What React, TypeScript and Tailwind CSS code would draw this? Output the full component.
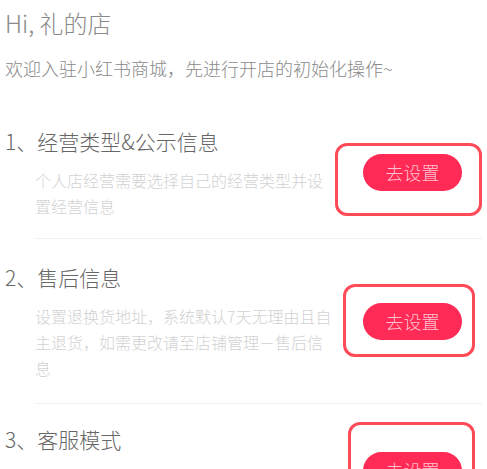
import React from "react";

const font = { fontFamily: '"Noto Sans CJK SC", "Noto Sans", sans-serif' };

type Sec = {
  title: string;
  desc: string;
  box: string;
};

function Section({ title, desc, box }: Sec) {
  return (
    <div className="flex items-center">
      <div className="flex-1">
        <div className="text-[21px] leading-[30px] text-[#666] font-light">{title}</div>
        <div className="mt-[11px] ml-[30px] w-[300px] text-[16px] leading-[26px] text-[#d2d2d2] font-light">
          {desc}
        </div>
      </div>
      <div className="relative mr-[20px]">
        <div className={"absolute border-[3px] border-[#ff4b58] rounded-[12px] " + box} />
        <button className="w-[99px] h-[37px] rounded-full bg-[#ff2a56] text-[18px] text-[#ffc2cf] font-light">
          去设置
        </button>
      </div>
    </div>
  );
}

export default function App() {
  return (
    <div className="w-[487px] h-[469px] overflow-hidden bg-white px-[5px]" style={font}>
      <div className="pt-[8px] text-[24px] leading-[30px] text-[#8a8a8a] font-light">Hi, 礼的店</div>
      <div className="mt-[17px] text-[18px] leading-[26px] text-[#8a8a8a] font-light">
        欢迎入驻小红书商城，先进行开店的初始化操作~
      </div>
      <div className="mt-[45px]">
        <Section
          title="1、经营类型&公示信息"
          desc="个人店经营需要选择自己的经营类型并设置经营信息"
          box="-left-[28px] -right-[20px] -top-[11px] -bottom-[25px]"
        />
        <div className="ml-[30px] mt-[19px] border-b border-[#f0f0f0]" />
        <div className="mt-[23px]">
          <Section
            title="2、售后信息"
            desc="设置退换货地址，系统默认7天无理由且自主退货，如需更改请至店铺管理－售后信息"
            box="-left-[20px] -right-[13px] -top-[19px] -bottom-[17px]"
          />
        </div>
        <div className="ml-[30px] mt-[22px] border-b border-[#f0f0f0]" />
        <div className="mt-[20px]">
          <Section
            title="3、客服模式"
            desc="选择客服模式后，消费者可以通过客服与你联系沟通"
            box="-left-[15px] -right-[13px] -top-[30px] -bottom-[20px]"
          />
        </div>
      </div>
    </div>
  );
}
